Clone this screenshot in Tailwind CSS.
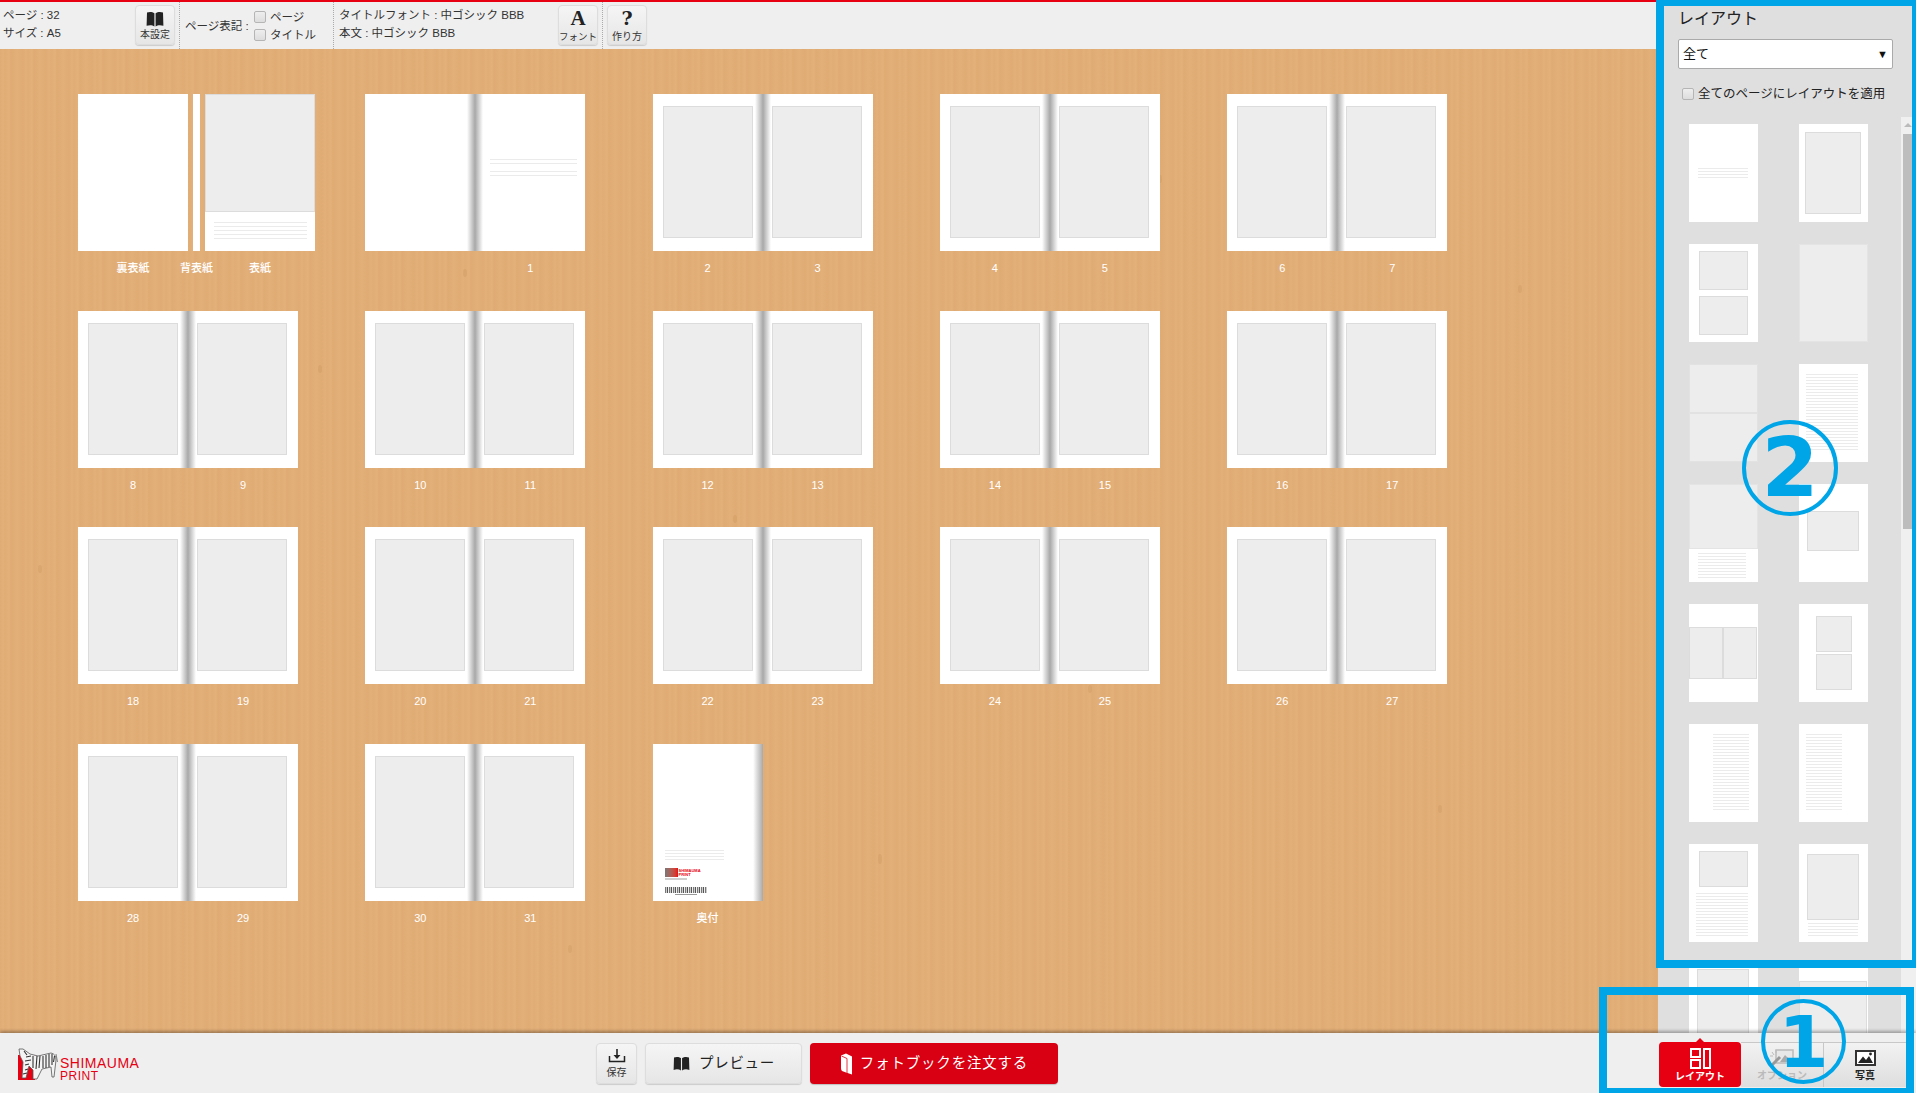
<!DOCTYPE html>
<html lang="ja">
<head>
<meta charset="UTF-8">
<title>フォトブック編集</title>
<script src="https://cdn.jsdelivr.net/npm/@tailwindcss/browser@4"></script>
</head>
<body class="font-['Liberation_Sans','Noto_Sans_CJK_JP',sans-serif] text-[#333]">
<div class="relative w-[1916px] h-[1093px] overflow-hidden flex flex-col bg-[#efefef]">

  <div class="flex flex-1 min-h-0">
    <!-- editor column -->
    <div class="w-[1658px] flex flex-col">
      <div class="h-[2px] bg-[#e60012]"></div>
      <div class="h-[47px] bg-[#efefef] flex text-[11.5px] leading-[18px]">
        <div class="w-[135px] pl-[3px] pt-[4px]">
          <p>ページ : 32</p>
          <p>サイズ : A5</p>
        </div>
        <div class="mt-[3px] w-[40px] h-[40px] rounded-[4px] border border-[#ddd] shadow-[0_1px_1px_rgba(0,0,0,0.15)] bg-gradient-to-b from-[#f5f5f5] to-[#e6e6e6] flex flex-col items-center pt-[5px] text-[10px] leading-[14px]">
          <svg width="18" height="16" viewBox="0 0 18 16"><path fill="#222" d="M1 1.5C3.5.6 6.5.8 8.4 2.2V15.4C6.5 14 3.5 13.8 0.6 14.8ZM17 1.5C14.5.6 11.5.8 9.6 2.2V15.4C11.5 14 14.5 13.8 17.4 14.8Z"/></svg>
          <span class="mt-[1px]">本設定</span>
        </div>
        <div class="ml-[4px] w-[154px] border-l border-dotted border-[#aaa] flex items-center pl-[5px]">
          <span class="w-[69px]">ページ表記 :</span>
          <div>
            <label class="flex items-center gap-[4px]"><input type="checkbox" class="appearance-none w-[12px] h-[12px] rounded-[2px] border border-[#b5b5b5] bg-gradient-to-b from-[#eee] to-[#ddd]">ページ</label>
            <label class="flex items-center gap-[4px]"><input type="checkbox" class="appearance-none w-[12px] h-[12px] rounded-[2px] border border-[#b5b5b5] bg-gradient-to-b from-[#eee] to-[#ddd]">タイトル</label>
          </div>
        </div>
        <div class="w-[225px] border-l border-dotted border-[#aaa] pl-[5px] pt-[4px]">
          <p>タイトルフォント : 中ゴシック BBB</p>
          <p>本文 : 中ゴシック BBB</p>
        </div>
        <div class="mt-[3px] w-[40px] h-[40px] rounded-[4px] border border-[#ddd] shadow-[0_1px_1px_rgba(0,0,0,0.15)] bg-gradient-to-b from-[#f5f5f5] to-[#e6e6e6] flex flex-col items-center text-[9.5px] leading-[14px] whitespace-nowrap">
          <span class="font-['Liberation_Serif',serif] font-bold text-[21px] leading-[24px] text-[#222]">A</span>
          <span>フォント</span>
        </div>
        <div class="ml-[4px] w-[1px] border-r border-dotted border-[#aaa]"></div>
        <div class="ml-[4px] mt-[3px] w-[40px] h-[40px] rounded-[4px] border border-[#ddd] shadow-[0_1px_1px_rgba(0,0,0,0.15)] bg-gradient-to-b from-[#f5f5f5] to-[#e6e6e6] flex flex-col items-center text-[10px] leading-[14px]">
          <span class="font-['DejaVu_Serif',serif] font-bold text-[19px] leading-[24px] text-[#222]">?</span>
          <span>作り方</span>
        </div>
      </div>

      <!-- wood desk with the spreads -->
      <div class="relative flex-1 bg-[#e2ae77] bg-[repeating-linear-gradient(90deg,rgba(190,130,70,0.06)_0,rgba(255,225,180,0.04)_3px,rgba(190,130,70,0.03)_5px,rgba(255,225,180,0.05)_9px,rgba(190,130,70,0.07)_11px,rgba(255,225,180,0.03)_17px,rgba(190,130,70,0.06)_23px)]">
        <svg class="absolute inset-0" width="1658" height="984" fill="#c48f58" fill-opacity="0.25">
          <ellipse cx="465" cy="224" rx="2" ry="4"/><ellipse cx="1160" cy="130" rx="2" ry="4"/><ellipse cx="735" cy="470" rx="2" ry="4"/>
          <ellipse cx="1295" cy="500" rx="2" ry="4"/><ellipse cx="215" cy="740" rx="2" ry="4"/><ellipse cx="880" cy="810" rx="2" ry="5"/>
          <ellipse cx="1440" cy="760" rx="2" ry="4"/><ellipse cx="320" cy="320" rx="2" ry="4"/><ellipse cx="1520" cy="240" rx="2" ry="4"/>
          <ellipse cx="570" cy="900" rx="2" ry="4"/><ellipse cx="1090" cy="640" rx="2" ry="4"/><ellipse cx="40" cy="520" rx="2" ry="4"/>
        </svg>
        <div id="desk" class="relative grid grid-cols-[repeat(5,287.3px)] auto-rows-[216.7px] pl-[78px] pt-[45px] text-white text-[11px]"></div>
      </div>
    </div>

    <!-- layout panel -->
    <div class="relative w-[258px] bg-[#dfdfdf] overflow-hidden">
      <p class="ml-[20px] mt-[8px] text-[16px] leading-[22px] text-[#222]">レイアウト</p>
      <div class="ml-[20px] mt-[9px] w-[215px] h-[30px] bg-white border border-[#aaa] rounded-[2px] flex items-center justify-between px-[4px] text-[13px] text-[#111]">
        <span>全て</span><span class="text-[11px]">▼</span>
      </div>
      <label class="ml-[24px] mt-[18px] flex items-center gap-[4px] text-[12.5px] leading-[14px] text-[#222]">
        <input type="checkbox" class="appearance-none w-[12px] h-[12px] rounded-[2px] border border-[#b5b5b5] bg-gradient-to-b from-[#eee] to-[#ddd]">全てのページにレイアウトを適用
      </label>

      <div class="ml-[31px] mt-[23px] w-[179px] grid grid-cols-[69px_69px] justify-between auto-rows-[98px] gap-y-[22px]">
        <div class="bg-white pt-[44px] pl-[9px]"><div class="w-[50px] h-[10px] bg-[repeating-linear-gradient(#ebebeb_0,#ebebeb_1px,transparent_1px,transparent_3px)]"></div></div>
        <div class="bg-white pt-[8px] pl-[6px]"><div class="w-[56px] h-[82px] bg-[#ededed] border border-[#dcdcdc]"></div></div>

        <div class="bg-white pt-[7px] pl-[10px]"><div class="w-[49px] h-[39px] bg-[#ededed] border border-[#dcdcdc]"></div><div class="mt-[6px] w-[49px] h-[39px] bg-[#ededed] border border-[#dcdcdc]"></div></div>
        <div class="bg-[#e4e4e4] p-[1px]"><div class="h-full bg-[#ededed]"></div></div>

        <div class="bg-[#e2e2e2] p-[1px]"><div class="h-[47px] bg-[#ededed]"></div><div class="mt-[2px] h-[47px] bg-[#ededed]"></div></div>
        <div class="bg-white pt-[10px] pl-[7px]"><div class="w-[52px] h-[76px] bg-[repeating-linear-gradient(#ebebeb_0,#ebebeb_1px,transparent_1px,transparent_3px)]"></div></div>

        <div class="bg-white"><div class="h-[65px] bg-[#ededed] border border-[#e4e4e4]"></div><div class="ml-[9px] mt-[4px] w-[48px] h-[25px] bg-[repeating-linear-gradient(#ebebeb_0,#ebebeb_1px,transparent_1px,transparent_3px)]"></div></div>
        <div class="bg-white pt-[27px] pl-[8px]"><div class="w-[52px] h-[40px] bg-[#ededed] border border-[#dcdcdc]"></div></div>

        <div class="bg-white pt-[23px] flex"><div class="w-[34px] h-[52px] bg-[#ededed] border border-[#dcdcdc]"></div><div class="w-[34px] h-[52px] bg-[#ededed] border border-[#dcdcdc]"></div></div>
        <div class="bg-white pt-[12px] pl-[17px]"><div class="w-[36px] h-[36px] bg-[#ededed] border border-[#dcdcdc]"></div><div class="mt-[2px] w-[36px] h-[36px] bg-[#ededed] border border-[#dcdcdc]"></div></div>

        <div class="bg-white pt-[10px] pl-[24px]"><div class="w-[36px] h-[76px] bg-[repeating-linear-gradient(#ebebeb_0,#ebebeb_1px,transparent_1px,transparent_3px)]"></div></div>
        <div class="bg-white pt-[10px] pl-[7px]"><div class="w-[36px] h-[76px] bg-[repeating-linear-gradient(#ebebeb_0,#ebebeb_1px,transparent_1px,transparent_3px)]"></div></div>

        <div class="bg-white pt-[7px] pl-[10px]"><div class="w-[49px] h-[36px] bg-[#ededed] border border-[#dcdcdc]"></div><div class="-ml-[3px] mt-[6px] w-[52px] h-[43px] bg-[repeating-linear-gradient(#ebebeb_0,#ebebeb_1px,transparent_1px,transparent_3px)]"></div></div>
        <div class="bg-white pt-[10px] pl-[8px]"><div class="w-[52px] h-[66px] bg-[#ededed] border border-[#dcdcdc]"></div><div class="ml-[1px] mt-[3px] w-[50px] h-[13px] bg-[repeating-linear-gradient(#ebebeb_0,#ebebeb_1px,transparent_1px,transparent_3px)]"></div></div>

        <div class="bg-white pt-[5px] pl-[8px]"><div class="w-[52px] h-[88px] bg-[#ededed] border border-[#dcdcdc]"></div></div>
        <div class="bg-white pt-[17px]"><div class="w-[68px] h-[81px] bg-[#ededed] border border-[#dcdcdc]"></div></div>
      </div>

      <!-- scrollbar -->
      <div class="absolute left-[243px] top-[117px] bottom-0 w-[15px] bg-[#f0f0f0]">
        <div class="ml-[2px] w-[9px] h-[17px] flex justify-center pt-[6px]"><div class="w-0 h-0 border-x-[4px] border-x-transparent border-b-[4px] border-b-[#bbb]"></div></div>
        <div class="ml-[2px] w-[9px] h-[395px] bg-[#bdbdbd]"></div>
      </div>
    </div>
  </div>

  <!-- footer -->
  <div class="relative z-10 h-[60px] bg-[#efefef] shadow-[0_-2px_3px_rgba(0,0,0,0.3)] flex">
    <div class="w-[596px] pl-[18px] pt-[15px] flex items-start gap-[2px]">
      <svg width="40" height="34" viewBox="0 0 40 34">
        <rect x="0" y="7" width="17" height="25" fill="#e60012"/>
        <path fill="#f4f4f4" stroke="#555" stroke-width="0.8" d="M1 1 L5 1 L12 6 L20 8 L33 5 Q38 6 38 12 L36 29 L34 29 L33 19 L24 21 L19 31 L15 31 L15 22 L11 18 L8 30 L4 30 L5 14 L2 8Z"/>
        <path stroke="#333" stroke-width="1.1" fill="none" d="M19 8L18 21M22 8L21 20M25 8L25 20M28 7L28 20M31 6L31 19M34 6L34 17M36.5 8L35.5 14M6 3L9 7M8 9L13 8M7 13L13 12M7 17L11 16M15 8L15 20M10 21L7 22M9 25L5 26"/>
        <path stroke="#666" stroke-width="0.8" fill="none" d="M38 6L39.5 14"/>
      </svg>
      <div class="text-[#e60012] text-[14px] leading-[13px] tracking-[0.5px] pt-[9px]">
        <p>SHIMAUMA</p>
        <p class="text-[12px]">PRINT</p>
      </div>
    </div>
    <div class="mt-[10px] w-[41px] h-[41px] rounded-[4px] border border-[#ddd] shadow-[0_1px_1px_rgba(0,0,0,0.15)] bg-gradient-to-b from-[#f5f5f5] to-[#e6e6e6] flex flex-col items-center pt-[4px] text-[10px] leading-[14px]">
      <svg width="18" height="16" viewBox="0 0 18 16" fill="none" stroke="#222"><path stroke-width="1.5" d="M1.5 8V13.5H16.5V8"/><path stroke-width="1.6" d="M9 1V9"/><path fill="#222" stroke="none" d="M5.5 7H12.5L9 11Z"/></svg>
      <span class="mt-[2px]">保存</span>
    </div>
    <div class="mt-[10px] ml-[8px] w-[157px] h-[41px] rounded-[4px] border border-[#ddd] shadow-[0_1px_1px_rgba(0,0,0,0.15)] bg-gradient-to-b from-[#f5f5f5] to-[#e6e6e6] flex items-center justify-center gap-[8px] text-[14.5px] tracking-[0.7px] text-[#222]">
      <svg width="19" height="15" viewBox="0 0 18 16"><path fill="#222" d="M1 1.5C3.5.6 6.5.8 8.4 2.2V15.4C6.5 14 3.5 13.8 0.6 14.8ZM17 1.5C14.5.6 11.5.8 9.6 2.2V15.4C11.5 14 14.5 13.8 17.4 14.8Z"/></svg>
      <span>プレビュー</span>
    </div>
    <div class="mt-[10px] ml-[8px] w-[248px] h-[41px] rounded-[4px] bg-[#d80012] shadow-[0_1px_1px_rgba(0,0,0,0.2)] flex items-center justify-center gap-[7px] text-[14.5px] tracking-[0.8px] text-white">
      <svg width="13" height="22" viewBox="0 0 13 22" fill="#fff"><path d="M1 2.5 L6 0.5 L12 3.5 V21.5 L6 19.5 L2 18 Q1 17 1 15Z"/><path stroke="#d80012" stroke-width="0.8" fill="none" d="M1.5 3 L7 5.5 V21"/></svg>
      <span>フォトブックを注文する</span>
    </div>

    <div class="ml-auto mr-[10px] mt-[9px] h-[45px] flex text-[10px]">
      <div class="relative w-[82px] rounded-[4px] bg-[#e60012] text-white flex flex-col items-center pt-[6px] font-bold">
        <div class="absolute -top-[4px] left-[37px] w-0 h-0 border-x-[4px] border-x-transparent border-b-[4px] border-b-[#e60012]"></div>
        <svg width="21" height="21" viewBox="0 0 21 21" fill="none" stroke="#fff" stroke-width="2"><rect x="1" y="1" width="9" height="8"/><rect x="1" y="12" width="9" height="8"/><rect x="14" y="1" width="6" height="19"/></svg>
        <span class="mt-[1px] leading-[14px]">レイアウト</span>
      </div>
      <div class="w-[83px] border-t border-r border-[#c8c8c8] bg-gradient-to-b from-[#f2f2f2] to-[#dedede] flex flex-col items-center pt-[6px] text-[#bbb] font-bold">
        <svg width="24" height="18" viewBox="0 0 24 18"><rect x="6" y="1" width="17" height="13" fill="#e8e8e8" stroke="#bbb" stroke-width="1.5"/><path fill="#aaa" d="M10 13L15 6L22 13Z"/><path stroke="#999" stroke-width="3" d="M1 17L10 8"/><path stroke="#bbb" stroke-width="1" d="M2 3L4 6M6 1L6 4M0 7L3 7"/></svg>
        <span class="mt-[2px] leading-[14px]">オプション</span>
      </div>
      <div class="w-[82px] border-t border-[#c8c8c8] bg-gradient-to-b from-[#f2f2f2] to-[#dedede] flex flex-col items-center pt-[7px] text-[#222] font-bold">
        <svg width="21" height="16" viewBox="0 0 21 16"><rect x="1" y="1" width="19" height="14" fill="#fff" stroke="#333" stroke-width="2"/><path fill="#222" d="M3 13L8 6.5L11 10L14 6L18 13Z"/><circle cx="15.5" cy="4" r="1.4" fill="#222"/></svg>
        <span class="mt-[3px] leading-[14px]">写真</span>
      </div>
    </div>
  </div>

  <!-- annotation frames -->
  <div class="absolute z-20 left-[1656px] top-0 w-[260px] h-[968px] border-[#00a5e8] border-t-[6px] border-x-[8px] border-r-[4px] border-b-[8px]"></div>
  <div class="absolute z-20 left-[1599px] top-[987px] w-[315px] h-[106px] border-[#00a5e8] border-x-[8px] border-t-[8px] border-b-[5px]"></div>
  <div class="absolute z-30 left-[1742px] top-[420px] w-[96px] h-[96px] rounded-full border-[4px] border-[#00a5e8] flex items-center justify-center font-['DejaVu_Sans',sans-serif] font-bold text-[82px] leading-none text-[#00a5e8]">2</div>
  <div class="absolute z-30 left-[1761px] top-[999px] w-[85px] h-[85px] rounded-full border-[4px] border-[#00a5e8] flex items-center justify-center font-['DejaVu_Sans',sans-serif] font-bold text-[72px] leading-none text-[#00a5e8]">1</div>
</div>

<script>
  const photo = '<div class="w-[90px] h-[132px] mt-[12px] bg-[#ededed] border border-[#dcdcdc]"></div>';
  const gutter = '<div class="absolute left-[102px] top-0 bottom-0 w-[16px] bg-gradient-to-r from-white/0 via-[#a8a8a8] to-white/0"></div>';
  const lines = 'bg-[repeating-linear-gradient(#ebebeb_0,#ebebeb_1px,transparent_1px,transparent_4px)]';
  const desk = document.getElementById('desk');

  let html = `<div>
    <div class="flex h-[157px]">
      <div class="w-[110px] bg-white"></div>
      <div class="ml-[5px] w-[7px] bg-white"></div>
      <div class="ml-[5px] w-[110px] bg-white">
        <div class="h-[118px] bg-[#ededed] border border-[#dcdcdc]"></div>
        <div class="ml-[9px] mt-[10px] w-[93px] h-[19px] ${lines}"></div>
      </div>
    </div>
    <div class="flex mt-[10px] leading-[14px] font-medium">
      <span class="w-[110px] text-center">裏表紙</span>
      <span class="w-[17px] flex justify-center whitespace-nowrap">背表紙</span>
      <span class="w-[110px] text-center">表紙</span>
    </div>
  </div>
  <div>
    <div class="relative flex h-[157px] w-[220px] bg-white">
      ${gutter}
      <div class="ml-[125px] mt-[65px] w-[87px] h-[17px] bg-[repeating-linear-gradient(#ebebeb_0,#ebebeb_1px,transparent_1px,transparent_4px,#ebebeb_4px,#ebebeb_5px,transparent_5px,transparent_12px)]"></div>
    </div>
    <div class="flex mt-[10px] leading-[14px]"><span class="w-[110px]"></span><span class="w-[110px] text-center">1</span></div>
  </div>`;

  for (let p = 2; p < 32; p += 2) {
    html += `<div>
      <div class="relative flex h-[157px] w-[220px] bg-white pl-[10px] gap-[19px]">
        ${photo}${photo}${gutter}
      </div>
      <div class="flex mt-[10px] leading-[14px]"><span class="w-[110px] text-center">${p}</span><span class="w-[110px] text-center">${p + 1}</span></div>
    </div>`;
  }

  html += `<div>
    <div class="flex h-[157px] w-[110px] bg-white bg-gradient-to-r from-white from-[91%] to-[#a8a8a8] flex-col pl-[12px] pt-[106px]">
      <div class="w-[59px] h-[10px] bg-[repeating-linear-gradient(#ebebeb_0,#ebebeb_1px,transparent_1px,transparent_3px)]"></div>
      <div class="flex items-center gap-[1px] mt-[8px]">
        <div class="w-[13px] h-[9px] bg-gradient-to-r from-[#777] to-[#e60012]"></div>
        <div class="text-[#e60012] text-[4px] leading-[4px] font-bold"><p>SHIMAUMA</p><p>PRINT</p></div>
      </div>
      <div class="mt-[1px] w-[22px] h-[2px] bg-[#cfcfcf]"></div>
      <div class="mt-[7px] w-[42px] h-[6px] bg-[repeating-linear-gradient(90deg,#777_0,#777_1px,#ccc_1px,#ccc_2px,#555_2px,#555_3px,#eee_3px,#eee_4px)]"></div>
      <div class="mt-[1px] ml-[10px] w-[22px] h-[1px] bg-[#999]"></div>
    </div>
    <div class="mt-[10px] w-[110px] leading-[14px] text-center font-medium">奥付</div>
  </div>`;

  desk.innerHTML = html;
</script>
</body>
</html>
